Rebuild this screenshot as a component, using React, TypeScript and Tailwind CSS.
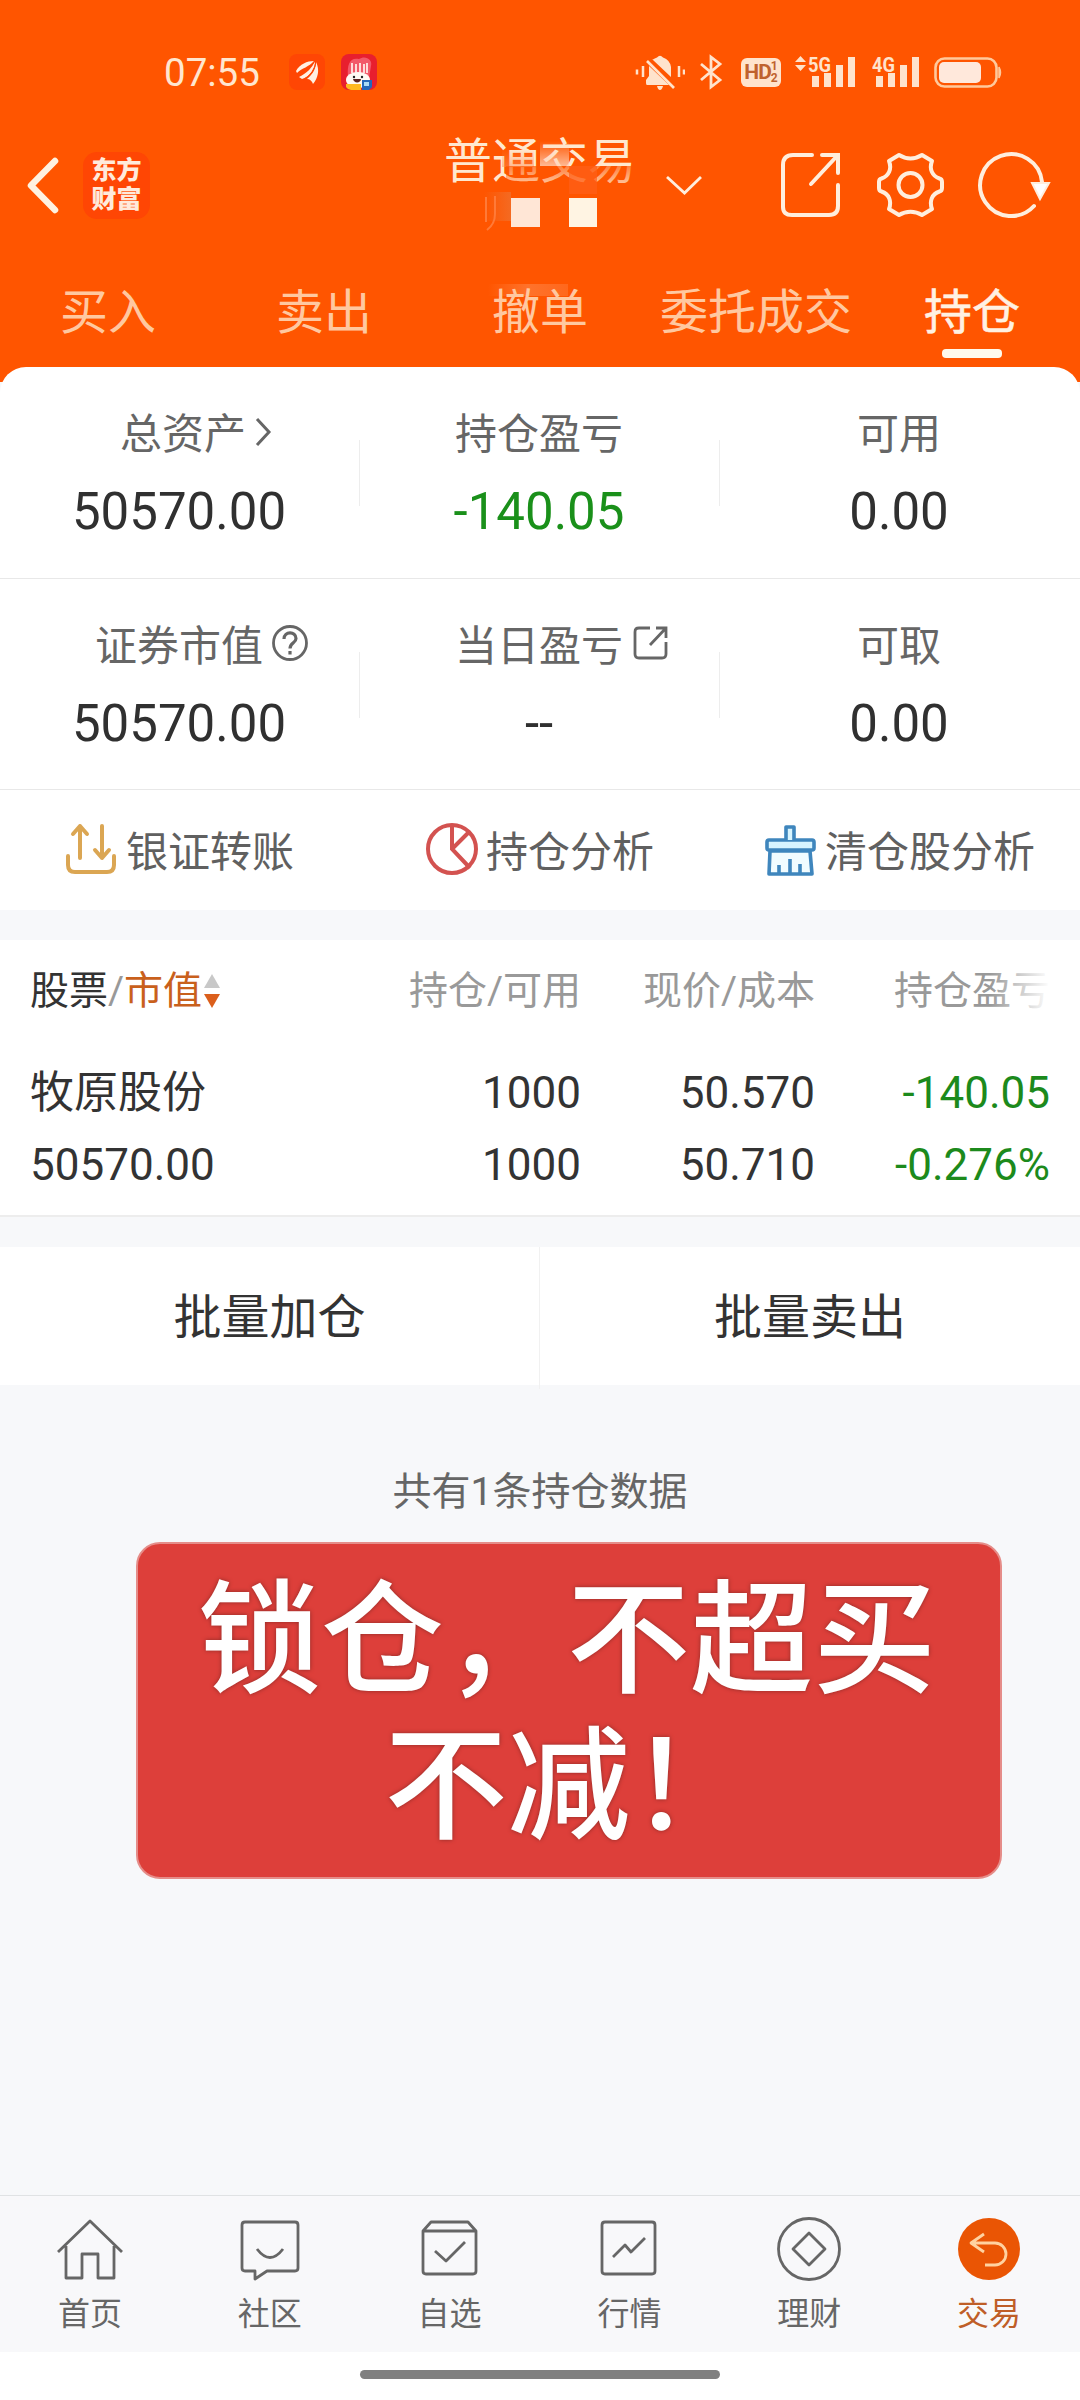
import type { ReactNode } from "react";

const cream = "#ffeedd";

function StatusBar() {
  return (
    <div className="flex h-9 items-center text-[#ffe3cc]">
      <span className="ml-[164px] w-[98px] pt-[2px] text-[38.5px] leading-9 text-[#ffe6cf]">07:55</span>
      <svg className="ml-[27px] size-9" viewBox="0 0 36 36">
        <rect width="36" height="36" rx="8" fill="#ff4604" />
        <g fill="#fff0e2">
          <path d="M7 17C11 10 18 7 25 7C20 13 13 14 8 19Z" />
          <path d="M10 23C18 19 23 14 26 7C27 15 20 23 13 25Z" />
          <path d="M18 25C24 20 27 14 27 8C31 16 29 24 24 30C23 27 21 25 18 25Z" />
        </g>
        <path d="M8 20C16 17 21 14 26 7M14 26C22 22 26 15 27 7" stroke="#ff4604" strokeWidth="1.200" fill="none" />
      </svg>
      <svg className="ml-4 size-9" viewBox="0 0 36 36">
        <rect width="36" height="36" rx="8" fill="#e81f2e" />
        <path d="M7 22C6 10 9 3 18 5C24 1 32 5 30 12L28 24Z" fill="#f2596a" />
        <path d="M11 9v10M15 10v9M19 9v10M23 10v9M26 9v10" stroke="#ffe9e6" strokeWidth="1.800" />
        <ellipse cx="17" cy="26" rx="12" ry="8" fill="#fffaf4" />
        <circle cx="13" cy="23" r="1.200" fill="#222" />
        <circle cx="21" cy="23" r="1.200" fill="#222" />
        <path d="M12 25h8c0 4-7 5-8 0Z" fill="#5a2320" />
        <path d="M5 30h15v6H10Q7 36 5 33Z" fill="#ffb91f" />
        <path d="M21 26h10v7l-3 3h-7z" fill="#2468bb" />
        <path d="M23 28h5v4h-5z" fill="#a9daf6" />
      </svg>
      <svg className="ml-[258px] h-9 w-[50px]" viewBox="0 0 50 36" fill="currentColor">
        <path d="M2 15.500v5M8 12v11M44 12v11M49 15.500v5" stroke="currentColor" strokeWidth="2.500" />
        <path d="M11 29v-3l3-4V12l20 19H12Q11 31 11 29ZM17 6Q20 4 22 3.500Q25 0 28 3.500Q35 6 36 13V23L18 6ZM22 32h6q-1 4-3 4t-3-4Z" />
        <path d="M12 7L39 34" stroke="currentColor" strokeWidth="2.600" />
      </svg>
      <svg className="ml-[14px] h-9 w-6" viewBox="0 0 24 36" fill="none" stroke="currentColor" strokeWidth="2.800">
        <path d="M2 10L21 26L12 33V3L21 10L2 26" />
      </svg>
      <div className="ml-[18px] flex h-[29px] w-10 items-center justify-center rounded-md bg-current">
        <span className="text-[21px] leading-none font-bold tracking-[-1px] text-[#c0622e]">HD</span>
        <span className="flex flex-col text-[12px] leading-[12px] font-bold text-[#c0622e]">
          <span>1</span>
          <span>2</span>
        </span>
      </div>
      <svg className="ml-[13px] h-9 w-[62px]" viewBox="0 0 62 36" fill="currentColor">
        <path d="M1 8L6.500 2L12 8ZM1 11L6.500 17L12 11Z" />
        <text x="14" y="17.500" fontSize="21" fontWeight="700" textLength="23" lengthAdjust="spacingAndGlyphs">5G</text>
        <path d="M18 22h7v11h-7zM30 19h7v14h-7zM42 11h7v22h-7zM54 3h7v30h-7z" />
      </svg>
      <svg className="ml-4 h-9 w-[48px]" viewBox="0 0 48 36" fill="currentColor">
        <text x="0" y="17.500" fontSize="21" fontWeight="700" textLength="23" lengthAdjust="spacingAndGlyphs">4G</text>
        <path d="M4 22h7v11h-7zM16 19h7v14h-7zM28 11h7v22h-7zM40 3h7v30h-7z" />
      </svg>
      <svg className="ml-[14px] h-9 w-[68px]" viewBox="0 0 68 36" fill="none">
        <rect x="1.500" y="4.500" width="61" height="28" rx="9" stroke="#ffc99c" strokeWidth="2.600" />
        <rect x="5" y="8" width="42" height="21" rx="5" fill="#ffe8db" />
        <path d="M65 13q3 5.500 0 11Z" fill="#ffc99c" stroke="#ffc99c" strokeWidth="1.500" />
      </svg>
    </div>
  );
}

function TitleBar() {
  return (
    <div className="mt-[47px] flex h-24 items-center">
      <svg className="ml-[25px] h-[60px] w-[35px]" viewBox="0 0 35 60" fill="none" stroke="#fff2e0" strokeWidth="6.500" strokeLinecap="round" strokeLinejoin="round">
        <path d="M30 6L6 30.500L30 55" />
      </svg>
      <div className="ml-[23px] flex size-[67px] flex-col items-center justify-center rounded-[14px] bg-[#ff4604] text-[25px] leading-[29px] font-black text-[#ffeadb]">
        <span>东方</span>
        <span>财富</span>
      </div>
      <div className="relative ml-[294px] h-full w-48 text-[48px] leading-[50px] whitespace-nowrap text-[#ffe8cf]">
        <span>普通交易</span>
        <span className="absolute top-3 left-[58px] h-[18px] w-8 bg-linear-to-b from-transparent to-[#ff8c55]/50" />
        <span className="absolute top-1 left-[96px] h-[25px] w-[29px] bg-linear-to-b from-transparent to-[#ffd2b8]/80" />
        <span className="absolute top-[29px] left-[62px] h-5 w-[130px] bg-linear-to-b from-[#ff5500]/70 to-[#ff5500]/20" />
        <span className="absolute top-[29px] left-[125px] h-7 w-7 bg-[#ff6018]/70" />
        <span className="absolute top-[55px] left-[40px] h-[29px] w-[27px] bg-linear-to-r from-transparent to-[#f46a22]" />
        <svg className="absolute top-[59px] left-[40px] h-9 w-4" viewBox="0 0 16 36" fill="none" stroke="#ff7a38" strokeWidth="2">
          <path d="M2 1v25M11 0v18q0 10-8 16" />
        </svg>
        <span className="absolute top-[61px] left-[67px] size-[29px] bg-[#ffe6d6]" />
        <span className="absolute top-[61px] left-[125px] h-[29px] w-7 bg-[#fff4e3]" />
      </div>
      <svg className="ml-7 h-6 w-10" viewBox="0 0 40 24" fill="none" stroke={cream} strokeWidth="2.800">
        <path d="M3 4L20.500 20L37 4" />
      </svg>
      <svg className="ml-[75px] h-[68px] w-[63px]" viewBox="0 0 63 68" fill="none" stroke={cream} strokeWidth="4" strokeLinecap="round">
        <path d="M33 4H14Q4 4 4 14V56Q4 64 13 64H50Q59 64 59 55V34M43 4H59V22M58 5L32 33" />
      </svg>
      <svg className="ml-[33px] h-[68px] w-[71px]" viewBox="0 0 71 68" fill="none" stroke={cream} strokeWidth="4" strokeLinejoin="round">
        <path d="M24 4C31 8.500 40 8.500 47 4L57 10C54 18 57 25 64.500 27.500Q67 28 67 31V37Q67 40 64.500 40.500C57 43 54 50 57 58L47 64C40 59.500 31 59.500 24 64L14 58C17 50 14 43 6.500 40.500Q4 40 4 37V31Q4 28 6.500 27.500C14 25 17 18 14 10Z" />
        <circle cx="35.500" cy="34" r="12" />
      </svg>
      <svg className="ml-[31px] h-[68px] w-[76px]" viewBox="0 0 76 68" fill="none" stroke={cream} strokeWidth="4" strokeLinecap="round">
        <path d="M65 31A31 31 0 1 0 57 55" />
        <path d="M55 32H72L63 48Z" fill="#fff" stroke={cream} strokeWidth="2" />
      </svg>
    </div>
  );
}

const tabs = ["买入", "卖出", "撤单", "委托成交", "持仓"];

function Tabs() {
  return (
    <div className="mt-[45px] grid grid-cols-5 text-center text-[48px] leading-[70px] whitespace-nowrap text-[#ffc8a0]">
      {tabs.map((t, i) => (
        <div key={t} className={i === 4 ? "relative text-[#fff1e2] [-webkit-text-stroke:0.6px_#fff1e2]" : "relative"}>
          {i === 2 && <span className="absolute top-[6px] left-14 h-[12px] w-20 bg-linear-to-r from-transparent via-[#ff8648]/60 to-[#ff7a38]/50" />}
          <span className="relative">{t}</span>
          {i === 4 && <div className="mx-auto mt-px h-[9px] w-[60px] rounded-[4px] bg-[#fffaec]" />}
        </div>
      ))}
    </div>
  );
}

function Metric({ label, value, icon, green, line }: { label: string; value: string; icon?: ReactNode; green?: boolean; line?: boolean }) {
  return (
    <div className="relative pt-[38px] pr-[2px] text-center">
      <div className="text-[42px] leading-[60px] text-[#666]">
        <span className={label === "总资产" ? "relative left-1 inline-block" : "relative inline-block"}>
          {label}
          {icon}
        </span>
      </div>
      <div className={green ? "mt-[17px] text-[51px] leading-[60px] text-[#1a901a]" : "mt-[17px] text-[51px] leading-[60px] text-[#303030]"}>{value}</div>
      {line && <div className="absolute top-[73px] right-0 h-[66px] w-px bg-[#ededed]" />}
    </div>
  );
}

function Metrics() {
  return (
    <>
      <div className="grid h-[212px] grid-cols-3 border-b border-[#e8e8e8]">
        <Metric
          label="总资产"
          value="50570.00"
          line
          icon={
            <svg className="absolute top-[11px] left-full ml-2 h-8 w-5" viewBox="0 0 20 32" fill="none" stroke="#666" strokeWidth="3">
              <path d="M3 3L15 16L3 29" />
            </svg>
          }
        />
        <Metric label="持仓盈亏" value="-140.05" green line />
        <Metric label="可用" value="0.00" />
      </div>
      <div className="grid h-[211px] grid-cols-3 border-b border-[#e8e8e8]">
        <Metric
          label="证券市值"
          value="50570.00"
          line
          icon={
            <svg className="absolute top-[7px] left-full ml-[8px] size-[38px]" viewBox="0 0 38 38" fill="none" stroke="#666" strokeWidth="2.800">
              <circle cx="19" cy="19" r="16.500" />
              <path d="M13 15C13 7 25 7 25 14.500C25 19 19 18.500 19 24.500M19 27v3.500" strokeWidth="3.200" />
            </svg>
          }
        />
        <Metric
          label="当日盈亏"
          value="--"
          line
          icon={
            <svg className="absolute top-[7px] left-full ml-[8px] size-[38px]" viewBox="0 0 38 38" fill="none" stroke="#666" strokeWidth="2.800">
              <path d="M19 4H8Q4 4 4 8V30Q4 34 8 34H31Q35 34 35 30V18M25 4H35V14M35 4L19 21" />
            </svg>
          }
        />
        <Metric label="可取" value="0.00" />
      </div>
    </>
  );
}

function Actions() {
  return (
    <div className="flex h-[120px] items-center text-[42px] leading-[60px] text-[#606060]">
      <div className="flex w-[360px] items-center pt-1.5 pl-16">
        <svg className="mr-2 h-14 w-[54px] -translate-y-[4px]" viewBox="0 0 54 56" fill="none" stroke="#dba653" strokeWidth="4" strokeLinecap="round" strokeLinejoin="round">
          <path d="M4 35V44Q4 51 11 51H43Q50 51 50 44V35" />
          <path d="M16 37V5M9 13L16 5L23 13M38 5V37M31 29L38 37L45 29" />
        </svg>
        银证转账
      </div>
      <div className="flex w-[400px] items-center pt-1.5 pl-16">
        <svg className="mr-1.5 size-14 -translate-y-[4px]" viewBox="0 0 56 56" fill="none" stroke="#d35250" strokeWidth="4">
          <circle cx="28" cy="28" r="24" />
          <path d="M28 4V28L46 47M28 28L45 11" />
        </svg>
        持仓分析
      </div>
      <div className="flex items-center pt-1.5">
        <svg className="mr-[7px] ml-0.5 h-14 w-14 -translate-y-[3px]" viewBox="0 0 56 56" fill="none" stroke="#3f86bd" strokeWidth="3.600" strokeLinejoin="round">
          <path d="M8 29L7 52H50L48 29Z" fill="#f1fcff" />
          <rect x="5" y="18" width="47" height="10" rx="2" fill="#d8f5ff" />
          <path d="M24 18V5H32V18" fill="#d8f5ff" />
          <path d="M17 52V43M28 52V37M38 52V42" />
        </svg>
        清仓股分析
      </div>
    </div>
  );
}

function Holdings() {
  return (
    <div className="h-[277px] border-b-2 border-[#ededed] bg-white">
      <div className="grid h-[101px] grid-cols-[331px_250px_234px_235px] items-center text-right text-[39px] leading-[60px] text-[#999]">
        <div className="flex items-center pl-[30px] text-left">
          <span className="text-[#333]">股票</span>
          <span className="w-[16px]">/</span>
          <span className="text-[#c9601c]">市值</span>
          <svg className="ml-px h-9 w-[18px]" viewBox="0 0 18 36">
            <path d="M1 15L9 1L17 15Z" fill="#c8c8c8" />
            <path d="M1 21L9 35L17 21Z" fill="#db5f1c" />
          </svg>
        </div>
        <div>持仓/可用</div>
        <div>现价/成本</div>
        <div className="relative">
          持仓盈亏
          <span className="absolute top-0 right-0 h-full w-[60px] bg-linear-to-r from-transparent to-white" />
        </div>
      </div>
      <div className="mt-[16px] grid grid-cols-[331px_250px_234px_235px] text-right text-[44px] leading-[72px] text-[#333]">
        <div className="pl-[30px] text-left">牧原股份</div>
        <div>1000</div>
        <div>50.570</div>
        <div className="text-[#1c8a1c]">-140.05</div>
        <div className="pl-[30px] text-left">50570.00</div>
        <div>1000</div>
        <div>50.710</div>
        <div className="text-[#1c8a1c]">-0.276%</div>
      </div>
    </div>
  );
}

const navIcons: { label: string; icon: ReactNode }[] = [
  { label: "首页", icon: <path d="M2 36L34 5L66 36M10 30V62H26V38H42V62H58V30" /> },
  { label: "社区", icon: <path d="M9 6H59Q62 6 62 9V52Q62 55 59 55H31L19 63V55H9Q6 55 6 52V9Q6 6 9 6ZM21 33Q34 50 47 33" /> },
  { label: "自选", icon: <path d="M7 15L15 6H52L60 15V55Q60 58 57 58H10Q7 58 7 55ZM7 15H60M19 35L30 45L49 26" /> },
  { label: "行情", icon: <path d="M10 6H57Q60 6 60 9V55Q60 58 57 58H10Q7 58 7 55V9Q7 6 10 6ZM18 41L30 29L36 36L50 22" /> },
  { label: "理财", icon: <><circle cx="34" cy="33" r="30.500" /><path d="M34 17L50 33L34 49L18 33Z" /></> },
  { label: "交易", icon: <><circle cx="34" cy="33" r="31" fill="#ea5504" stroke="none" /><path d="M29 18L16 27L29 36M17 27H40A11 11 0 0 1 40 49H30" stroke="#ffd2a0" /></> },
];

function BottomNav() {
  return (
    <nav className="grid h-[157px] grid-cols-6 border-t border-[#e0e2e4] bg-[#f8f8fa] pt-5 pr-px">
      {navIcons.map((n, i) => (
        <div key={n.label} className={i === 5 ? "flex flex-col items-center text-[#bf5e28]" : "flex flex-col items-center text-[#666]"}>
          <svg className="h-[68px] w-[68px]" viewBox="0 0 68 68" fill="none" stroke="currentColor" strokeWidth="2.800" strokeLinejoin="round">
            {n.icon}
          </svg>
          <span className="mt-[9px] text-[32px] leading-[42px]">{n.label}</span>
        </div>
      ))}
    </nav>
  );
}

export default function App() {
  return (
    <div className="flex h-[2400px] w-[1080px] flex-col overflow-hidden bg-[#f7f8fa] font-[Roboto,'Noto_Sans_CJK_SC',sans-serif]">
      <header className="h-[382px] shrink-0 bg-[#ff5500] pt-[54px]">
        <StatusBar />
        <TitleBar />
        <Tabs />
      </header>
      <section className="relative -mt-[15px] rounded-t-[26px] bg-white">
        <Metrics />
        <Actions />
      </section>
      <main className="flex grow flex-col pt-[30px]">
        <Holdings />
        <div className="mt-[30px] grid h-[138px] grid-cols-2 bg-white text-center text-[48px] leading-[142px] text-[#333]">
          <div className="border-r border-[#f1f1f1]">批量加仓</div>
          <div className="h-[138px]">批量卖出</div>
        </div>
        <p className="mt-[77px] text-center text-[39px] leading-[60px] text-[#666]">共有1条持仓数据</p>
        <div className="mt-[20px] ml-[136px] h-[337px] w-[866px] rounded-[24px] border-2 border-[#e58d89] bg-[#dd3f3a] pt-[24px] text-center text-[123px] leading-[146px] font-medium whitespace-nowrap text-white [text-shadow:0_0_4px_#8a2a26]">
          <div className="pr-1">锁仓，不超买</div>
          <div>不减！</div>
        </div>
      </main>
      <BottomNav />
      <div className="flex h-12 shrink-0 justify-center bg-white pt-[18px]">
        <div className="h-[9px] w-[360px] rounded-full bg-[#808080]" />
      </div>
    </div>
  );
}
